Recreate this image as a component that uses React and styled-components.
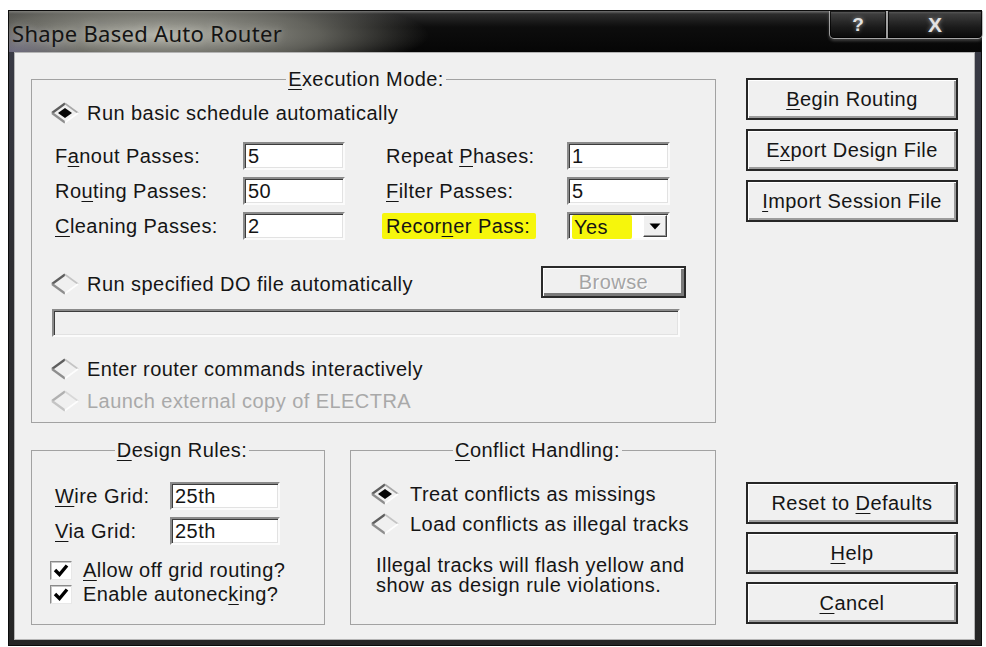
import React from 'react';
import styled, { createGlobalStyle } from 'styled-components';

const GlobalStyle = createGlobalStyle`
  html, body { margin: 0; padding: 0; background: #fff; }
  body { font-family: "Liberation Sans", Arial, sans-serif; }
  * { box-sizing: border-box; }
`;

const Page = styled.div`
  width: 986px;
  height: 647px;
  padding: 10px 0 0 8px;
  overflow: hidden;
  background: #fff;
`;

const Window = styled.div`
  width: 974px;
  height: 636px;
  display: flex;
  flex-direction: column;
  border: 1px solid #0c0c0c;
  background: linear-gradient(180deg, #3a3c48 0%, #2e2e32 40%, #262626 100%);
`;

const TitleBar = styled.div`
  height: 41px;
  flex: none;
  display: flex;
  align-items: flex-start;
  background:
    radial-gradient(ellipse 270px 44px at 150px 24px, rgba(186, 186, 176, 0.95), rgba(146, 146, 136, 0.62) 60%, rgba(0, 0, 0, 0) 100%),
    radial-gradient(ellipse 70px 28px at 4px 40px, rgba(120, 110, 210, 0.55), rgba(0, 0, 0, 0) 100%),
    linear-gradient(180deg, #707070 0, #2c2c2c 3px, #0d0d0d 16px, #060606 100%);
`;

const TitleText = styled.div`
  align-self: center;
  padding: 2px 0 0 3px;
  font-family: "Noto Sans", "Open Sans", sans-serif;
  font-size: 22px;
  letter-spacing: 0.3px;
  color: #141414;
  text-shadow: 0 0 8px rgba(225, 225, 215, 0.6);
`;

const CaptionButtons = styled.div`
  margin-left: auto;
  margin-right: -2px;
  display: flex;
  height: 28px;
  box-shadow: 0 2px 3px rgba(190, 190, 190, 0.3);
  border-radius: 0 0 5px 5px;
`;

const CaptionButton = styled.div`
  width: ${p => p.$w}px;
  height: 28px;
  display: flex;
  align-items: center;
  justify-content: center;
  font-family: "Liberation Sans", Arial, sans-serif;
  font-weight: bold;
  font-size: ${p => p.$fs}px;
  color: #e2e2e2;
  border: 1px solid rgba(205, 205, 205, 0.75);
  border-top: none;
  border-radius: ${p => p.$r};
  background: linear-gradient(180deg, rgba(90, 90, 90, 0.5), rgba(10, 10, 10, 0.6));
  box-shadow: inset 0 0 0 1px rgba(0, 0, 0, 0.7);
  text-shadow: 0 0 4px rgba(255, 255, 255, 0.5);
`;

const Client = styled.div`
  flex: none;
  height: 588px;
  margin: 0 6px 5px 5px;
  border: 1px solid #b4b4b4;
  background: #f0f0f0;
  display: grid;
  grid-template-columns: 685px 212px;
  column-gap: 30px;
  padding: 15px 16px 13px 16px;
  font-family: "Liberation Sans", Arial, sans-serif;
  font-size: 20px;
  letter-spacing: 0.45px;
  color: #151515;
`;

const LeftColumn = styled.div`
  display: flex;
  flex-direction: column;
`;

const Group = styled.fieldset`
  margin: 0;
  min-width: 0;
  border: 1px solid #a2a2a2;
  padding: ${p => p.$pad};
`;

const GroupTitle = styled.legend`
  margin: 0 auto;
  padding: 0 2px;
  line-height: 22px;
  height: 22px;
`;

const Key = styled.u`
  text-decoration: underline;
  text-underline-offset: 3px;
  text-decoration-thickness: 1px;
`;

const RadioLine = styled.div`
  display: flex;
  align-items: center;
  height: 24px;
  line-height: 24px;
  margin-top: ${p => p.$mt || 0}px;
  margin-left: -2px;
  color: ${p => (p.$disabled ? '#a9a9a9' : '#151515')};
  white-space: nowrap;

  svg {
    flex: none;
    margin-right: ${p => p.$gap || 7}px;
  }
`;

const DoFileRow = styled.div`
  display: flex;
  align-items: center;
  height: 32px;
  margin-top: 26px;

  & > ${RadioLine} {
    margin-top: 4px;
  }
`;

const FieldGrid = styled.div`
  display: grid;
  grid-template-columns: ${p => p.$cols};
  grid-auto-rows: 28px;
  row-gap: 7px;
  margin-top: ${p => p.$mt || 0}px;
`;

const FieldLabel = styled.div`
  align-self: center;
  line-height: 24px;
  padding-left: ${p => p.$indent || 3}px;
  white-space: nowrap;
`;

const Highlight = styled.span`
  background: #f6f60c;
  padding: 2px 6px 2px 4px;
  margin-left: -4px;
  border-radius: 2px;
`;

const TextBox = styled.input`
  width: 100%;
  height: 28px;
  margin: 0;
  padding: 0 0 0 3px;
  font: inherit;
  letter-spacing: inherit;
  color: #151515;
  background: ${p => (p.disabled ? '#f0f0f0' : '#fff')};
  border: 2px solid;
  border-color: #8a8a8a #fbfbfb #fbfbfb #8a8a8a;
  box-shadow: inset 1px 1px 0 #3c3c3c, inset -1px -1px 0 #e2e2e2;
  outline: none;
`;

const PathBox = styled(TextBox)`
  width: 628px;
  margin-top: 11px;
`;

const Combo = styled.div`
  height: 28px;
  display: flex;
  align-items: center;
  background: #fff;
  border: 2px solid;
  border-color: #8a8a8a #fbfbfb #fbfbfb #8a8a8a;
  box-shadow: inset 1px 1px 0 #3c3c3c;
  padding: 0 1px 0 3px;
`;

const ComboValue = styled.span`
  background: #f6f60c;
  line-height: 24px;
  height: 24px;
  padding: 0 24px 0 2px;
  border-radius: 2px;
  margin-top: 2px;
`;

const ComboArrow = styled.div`
  margin-left: auto;
  width: 24px;
  height: 22px;
  display: flex;
  align-items: center;
  justify-content: center;
  background: #f0f0f0;
  border: 1px solid;
  border-color: #fff #404040 #404040 #fff;
  box-shadow: inset -1px -1px 0 #9a9a9a;
`;

const BrowseButton = styled.div`
  margin-left: auto;
  margin-right: -6px;
  width: 145px;
  height: 32px;
  display: flex;
  align-items: center;
  justify-content: center;
  color: #a4a4a4;
  text-shadow: 1px 1px 0 #fff;
  background: #f0f0f0;
  border: 2px solid #2a2a2a;
  box-shadow: inset 1px 1px 0 #fff, inset -3px -3px 0 #7a7a7a;
`;

const BottomRow = styled.div`
  display: grid;
  grid-template-columns: 294px 366px;
  column-gap: 25px;
  margin-top: 16px;
`;

const CheckLine = styled.div`
  display: flex;
  align-items: center;
  height: 24px;
  line-height: 24px;
  margin-left: -2px;
  margin-top: ${p => p.$mt || 0}px;
  white-space: nowrap;
`;

const CheckBox = styled.span`
  flex: none;
  width: 22px;
  height: 19px;
  margin-right: 11px;
  display: flex;
  align-items: center;
  justify-content: center;
  background: #fff;
  border: 1px solid;
  border-color: #8a8a8a #e8e8e8 #e8e8e8 #8a8a8a;
  box-shadow: inset 1px 1px 0 #c8c8c8;
`;

const Note = styled.p`
  margin: 19px 0 0 4px;
  line-height: 20px;
`;

const ButtonColumn = styled.div`
  display: flex;
  flex-direction: column;
  justify-content: space-between;
  padding: 10px 0 2px 0;
`;

const ButtonStack = styled.div`
  display: flex;
  flex-direction: column;
  gap: ${p => p.$gap}px;
`;

const DialogButton = styled.button`
  width: 212px;
  height: 42px;
  margin: 0;
  padding: 0;
  font: inherit;
  letter-spacing: inherit;
  color: #151515;
  background: #f0f0f0;
  border: 2px solid #262626;
  box-shadow: inset 1px 1px 0 #fff, inset -2px -2px 0 #9c9c9c;
  cursor: default;
`;

// Motif-style diamond radio: dark upper-left edges, light lower-right edges
function Diamond({ checked, disabled }) {
  const dark = disabled ? '#b0b0b0' : '#5e5e5e';
  const mid = disabled ? '#c4c4c4' : '#8e8e8e';
  const light = disabled ? '#d8d8d8' : checked ? '#a8a8a8' : '#c4c4c4';
  return (
    <svg width="30" height="22" viewBox="0 0 30 22">
      <path d="M2 11 L15 1.5" stroke={dark} strokeWidth="2.2" fill="none" />
      <path d="M15 1.5 L28 11" stroke={light} strokeWidth="1.6" fill="none" />
      <path d="M2 11 L15 20.5" stroke={mid} strokeWidth="2.2" fill="none" />
      <path d="M15 20.5 L28 11" stroke="#fdfdfd" strokeWidth="1.6" fill="none" />
      {checked && <path d="M8 11 L15 6 L22 11 L15 16 Z" fill="#050505" />}
    </svg>
  );
}

function Radio({ checked, disabled, gap, mt, children }) {
  return (
    <RadioLine $disabled={disabled} $gap={gap} $mt={mt}>
      <Diamond checked={checked} disabled={disabled} />
      <span>{children}</span>
    </RadioLine>
  );
}

function Check({ mt, children }) {
  return (
    <CheckLine $mt={mt}>
      <CheckBox>
        <svg width="16" height="14" viewBox="0 0 16 14">
          <path d="M2 7 L6.5 11.5 L14 2.5" stroke="#000" strokeWidth="3.4" fill="none" />
        </svg>
      </CheckBox>
      <span>{children}</span>
    </CheckLine>
  );
}

export default function App() {
  return (
    <Page>
      <GlobalStyle />
      <Window>
        <TitleBar>
          <TitleText>Shape Based Auto Router</TitleText>
          <CaptionButtons>
            <CaptionButton $w={58} $fs={19} $r="0 0 0 5px">?</CaptionButton>
            <CaptionButton $w={96} $fs={21} $r="0 0 5px 0">X</CaptionButton>
          </CaptionButtons>
        </TitleBar>

        <Client>
          <LeftColumn>
            <Group $pad="11px 35px 9px 20px">
              <GroupTitle><Key>E</Key>xecution Mode:</GroupTitle>
              <Radio checked>Run basic schedule automatically</Radio>

              <FieldGrid $cols="191px 102px 222px 103px" $mt={17}>
                <FieldLabel>F<Key>a</Key>nout Passes:</FieldLabel>
                <TextBox readOnly defaultValue="5" />
                <FieldLabel $indent={41}>Repeat <Key>P</Key>hases:</FieldLabel>
                <TextBox readOnly defaultValue="1" />

                <FieldLabel>Ro<Key>u</Key>ting Passes:</FieldLabel>
                <TextBox readOnly defaultValue="50" />
                <FieldLabel $indent={41}><Key>F</Key>ilter Passes:</FieldLabel>
                <TextBox readOnly defaultValue="5" />

                <FieldLabel><Key>C</Key>leaning Passes:</FieldLabel>
                <TextBox readOnly defaultValue="2" />
                <FieldLabel $indent={41}>
                  <Highlight>Recor<Key>n</Key>er Pass:</Highlight>
                </FieldLabel>
                <Combo>
                  <ComboValue>Yes</ComboValue>
                  <ComboArrow>
                    <svg width="12" height="7" viewBox="0 0 12 7">
                      <path d="M0.5 0.5 H11.5 L6 6.5 Z" fill="#000" />
                    </svg>
                  </ComboArrow>
                </Combo>
              </FieldGrid>

              <DoFileRow>
                <Radio>Run specified DO file automatically</Radio>
                <BrowseButton>Browse</BrowseButton>
              </DoFileRow>
              <PathBox disabled defaultValue="" />

              <Radio mt={20}>Enter router commands interactively</Radio>
              <Radio mt={8} disabled>Launch external copy of ELECTRA</Radio>
            </Group>

            <BottomRow>
              <Group $pad="21px 12px 18px 20px">
                <GroupTitle><Key>D</Key>esign Rules:</GroupTitle>
                <FieldGrid $cols="118px 110px">
                  <FieldLabel><Key>W</Key>ire Grid:</FieldLabel>
                  <TextBox readOnly defaultValue="25th" />
                  <FieldLabel><Key>V</Key>ia Grid:</FieldLabel>
                  <TextBox readOnly defaultValue="25th" />
                </FieldGrid>
                <Check mt={13}><Key>A</Key>llow off grid routing?</Check>
                <Check>Enable autonec<Key>k</Key>ing?</Check>
              </Group>

              <Group $pad="21px 12px 18px 21px">
                <GroupTitle><Key>C</Key>onflict Handling:</GroupTitle>
                <Radio checked gap={10}>Treat conflicts as missings</Radio>
                <Radio gap={10} mt={6}>Load conflicts as illegal tracks</Radio>
                <Note>
                  Illegal tracks will flash yellow and
                  <br />
                  show as design rule violations.
                </Note>
              </Group>
            </BottomRow>
          </LeftColumn>

          <ButtonColumn>
            <ButtonStack $gap={9}>
              <DialogButton><Key>B</Key>egin Routing</DialogButton>
              <DialogButton>E<Key>x</Key>port Design File</DialogButton>
              <DialogButton><Key>I</Key>mport Session File</DialogButton>
            </ButtonStack>
            <ButtonStack $gap={8}>
              <DialogButton>Reset to <Key>D</Key>efaults</DialogButton>
              <DialogButton><Key>H</Key>elp</DialogButton>
              <DialogButton><Key>C</Key>ancel</DialogButton>
            </ButtonStack>
          </ButtonColumn>
        </Client>
      </Window>
    </Page>
  );
}
